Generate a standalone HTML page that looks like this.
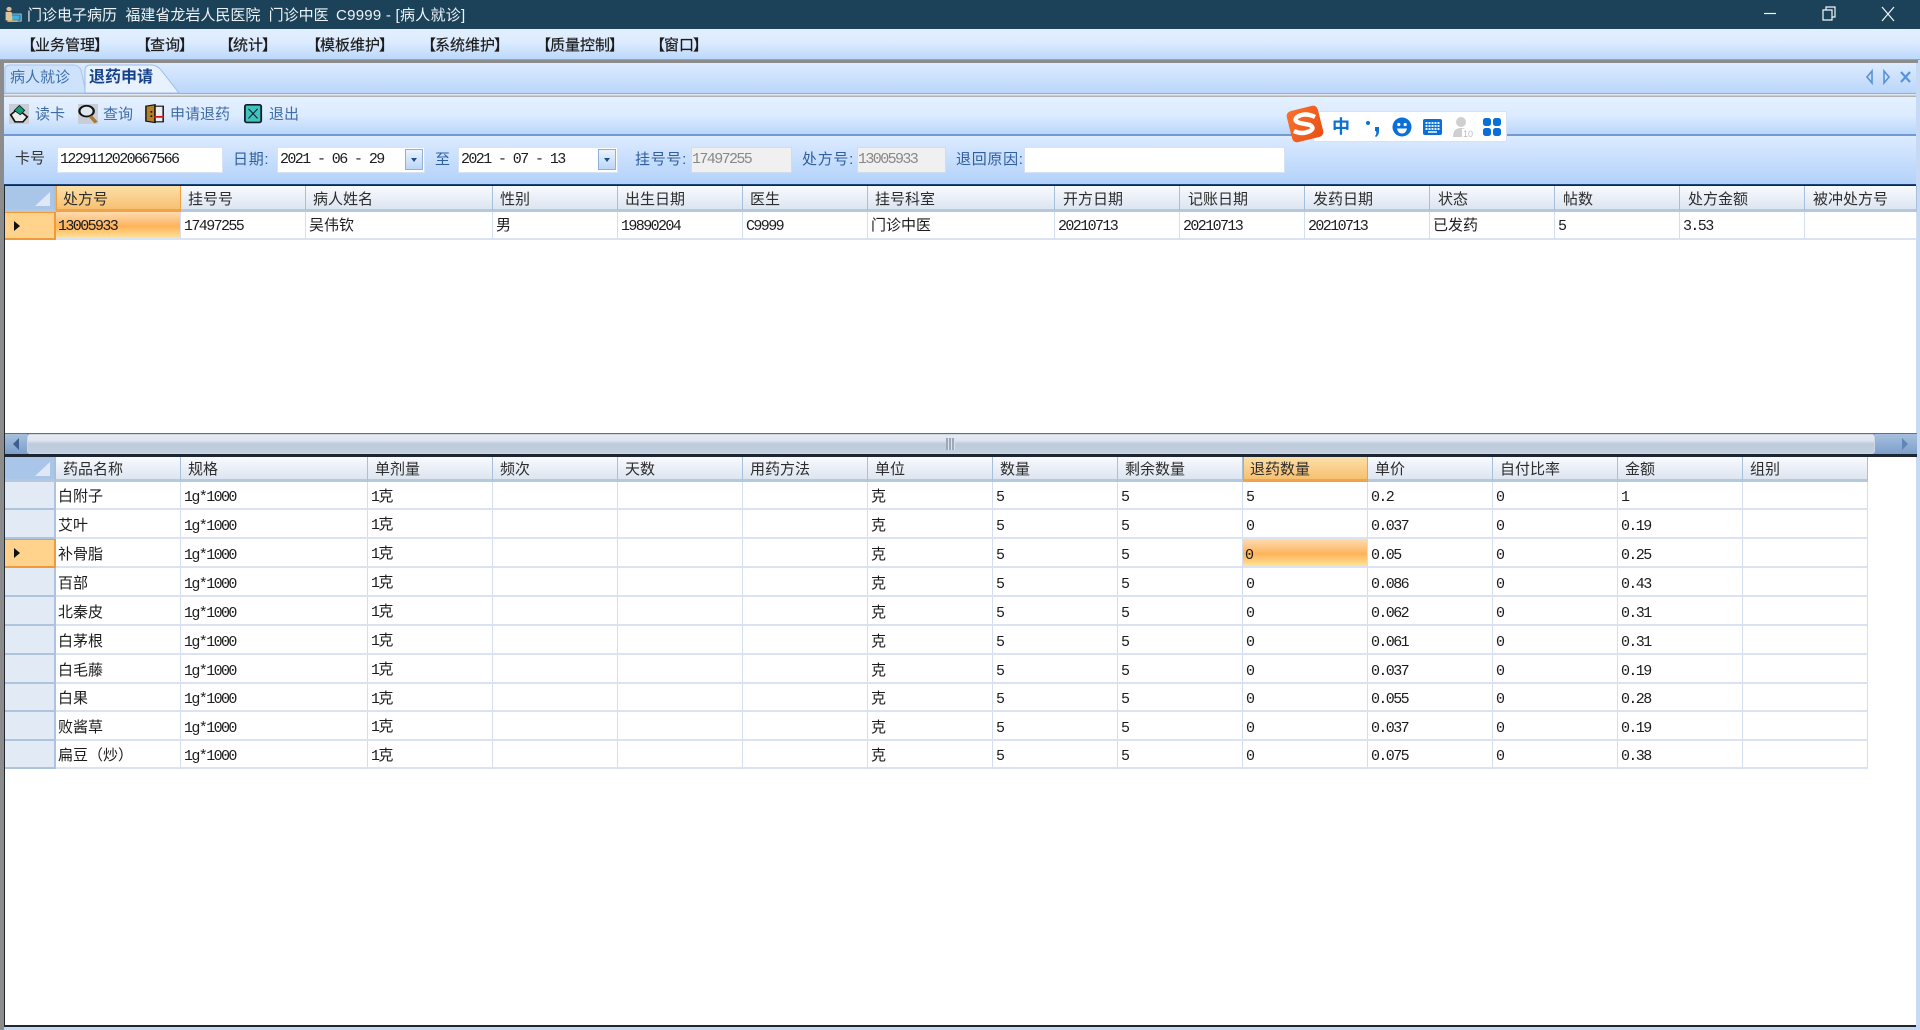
<!DOCTYPE html>
<html lang="zh-CN"><head><meta charset="utf-8"><title>门诊电子病历</title>
<style>
html,body{margin:0;padding:0;width:1920px;height:1030px;overflow:hidden;background:#c6daf6}
body{position:relative;font-family:"Liberation Sans","Noto Sans CJK SC",sans-serif;font-size:15px;color:#1c1c1c;filter:blur(.3px)}
.a{position:absolute}
.t{position:absolute;white-space:nowrap;line-height:20px}
.m{top:36px;-webkit-text-stroke:.2px #1c1c1c}
.n{font-family:"Liberation Mono","Noto Sans CJK SC",monospace;letter-spacing:-1.6px;font-size:15px}
.inp{position:absolute;background:#fff;border:1px solid #d6e3f4;box-sizing:border-box;height:26px;line-height:24px;padding-left:2px}
.dis{background:#f0f0f0;color:#888;border-color:#cfdcee;padding-left:0}
.btn{position:absolute;width:18px;height:21px;top:149px;background:linear-gradient(#eaf3fe,#bcd6f6);border:1px solid #8fb0d8;box-sizing:border-box}
.btn:after{content:"";position:absolute;left:5px;top:8px;border:3px solid transparent;border-top:4px solid #1d4f91}
.bl{color:#2f5f9f;letter-spacing:.7px;top:150px !important}
.tb{color:#3f6ba6}
table{position:absolute;border-collapse:separate;border-spacing:0;table-layout:fixed;background:#fff}
td{box-sizing:border-box;padding:4px 0 0 3px;border-right:1px solid #d3deee;border-bottom:2px solid #d9e3f1;overflow:hidden;white-space:nowrap;color:#1c1c1c;line-height:16px}
td.n{padding-top:6px}
.T td{padding-top:1px}
.T td.n{padding-top:3px}
tr.h td{background:linear-gradient(#f8fafd,#dde5f1);border-right:1px solid #a6bfda;border-bottom:3px solid #b4c8de;padding:4px 0 0 7px;color:#2c2c2c}
tr.h td.sel{background:linear-gradient(#fbe0a8,#f7c071);border-right:1px solid #f0a040;border-bottom:3px solid #f2a24a;border-left:1px solid #f0a040;padding-left:6px}
.T tr.h td:nth-child(n+9){padding-left:8px}
td.rh{background:#e2eaf6;border-right:2px solid #aec4de;border-bottom:2px solid #aec4de;padding:0}
td.rhs{background:#ffd38c;border-right:2px solid #f19a3c;border-bottom:2px solid #f19a3c;border-top:1px solid #f19a3c;padding:0 !important;position:relative}
td.rhs:after{content:"";position:absolute;left:9px;top:50%;margin-top:-5px;border:5px solid transparent;border-left:6px solid #111;border-right:0}
td.c{background:#a9c6e9 !important;padding:0 !important;position:relative;border-right:2px solid #a6bfda !important}
td.c:after{content:"";position:absolute;right:4px;bottom:3px;border:0 solid transparent;border-width:0 0 14px 15px;border-bottom-color:#dfe8f4}
td.cs{background:linear-gradient(#fedcae 0,#fdc27e 35%,#fdb359 55%,#ffe39a 100%);padding-left:2px}
.L td:nth-child(2){padding-left:2px}
.L tr.h td:nth-child(2){padding-left:7px}
.L td:nth-child(3){padding-left:3px}
.L tr.h td:nth-child(3){padding-left:7px}
</style></head><body>

<!-- title bar -->
<div class="a" style="left:0;top:0;width:1920px;height:29px;background:#1c4259"></div>
<svg class="a" style="left:3px;top:4px" width="19" height="20" viewBox="0 0 22 28" preserveAspectRatio="none"><rect x="7" y="14" width="14" height="10" fill="#1d6f9c" stroke="#cfe3ee"/><rect x="9" y="16" width="10" height="6" fill="#3fb0e0"/><circle cx="7" cy="7" r="3" fill="#e8b890"/><path d="M3 11h7l1 12H3z" fill="#e0c49a"/><path d="M5 24h12" stroke="#f0c060" stroke-width="2"/></svg>
<div class="t" style="left:27px;top:6px;color:#eef3f7;font-size:15px">门诊电子病历&nbsp;&nbsp;福建省龙岩人民医院&nbsp;&nbsp;门诊中医&nbsp;&nbsp;<span style="letter-spacing:.25px;margin-left:-1px">C9999 - [病人就诊]</span></div>
<svg class="a" style="left:1759px;top:1px" width="140" height="26" viewBox="0 0 140 26" fill="none" stroke="#f2f6f9" stroke-width="1.2"><path d="M5 12.5h12"/><path d="M64 9h9v10h-9z"/><path d="M67 9V6h9v10h-3"/><path d="M123 6l12 14M135 6l-12 14"/></svg>

<!-- menu -->
<div class="a" style="left:0;top:29px;width:1920px;height:31px;background:linear-gradient(#e3efff,#dcebfe 45%,#bcd8fb);border-bottom:1px solid #7fa6d6;box-sizing:border-box"></div>
<div class="t m" style="left:21px"><span style="margin-right:-1px">【</span>业务管理<span style="margin-left:-1px">】</span></div>
<div class="t m" style="left:136px"><span style="margin-right:-1px">【</span>查询<span style="margin-left:-1px">】</span></div>
<div class="t m" style="left:219px"><span style="margin-right:-1px">【</span>统计<span style="margin-left:-1px">】</span></div>
<div class="t m" style="left:306px"><span style="margin-right:-1px">【</span>模板维护<span style="margin-left:-1px">】</span></div>
<div class="t m" style="left:421px"><span style="margin-right:-1px">【</span>系统维护<span style="margin-left:-1px">】</span></div>
<div class="t m" style="left:536px"><span style="margin-right:-1px">【</span>质量控制<span style="margin-left:-1px">】</span></div>
<div class="t m" style="left:650px"><span style="margin-right:-1px">【</span>窗口<span style="margin-left:-1px">】</span></div>

<!-- gray frame -->
<div class="a" style="left:0;top:60px;width:1918px;height:3px;background:#8c8c8c"></div>
<div class="a" style="left:0;top:60px;width:4px;height:970px;background:#8c8c8c"></div>

<!-- tab bar -->
<div class="a" style="left:4px;top:63px;width:1912px;height:31px;background:linear-gradient(#dcebff,#b9d6fb);border-bottom:1px solid #8fb1dc;box-sizing:border-box"></div>
<svg class="a" style="left:4px;top:64px" width="176" height="30" viewBox="0 0 176 30"><path d="M1 29V6q0-5 5-5h63q6 0 8 5l5 23z" fill="#cfe2fb" stroke="#a9c5ee"/><path d="M81 29V6q0-5 6-5h60q6 0 10 5l18 23z" fill="#e8f2ff" stroke="#9dbce8"/></svg>
<div class="t" style="left:10px;top:68px;color:#3f70aa">病人就诊</div>
<div class="t" style="left:89px;top:68px;color:#15428b;font-weight:bold;font-size:16px">退药申请</div>
<svg class="a" style="left:1864px;top:68px" width="50" height="18" viewBox="0 0 50 18" fill="none" stroke="#5a92dc" stroke-width="1.6"><path d="M8 3L3 9l5 6z"/><path d="M20 3l5 6-5 6z"/><path d="M37 4l9 10M46 4l-9 10" stroke-width="2.2"/></svg>

<!-- toolbar -->
<div class="a" style="left:4px;top:94px;width:1912px;height:3px;background:linear-gradient(#eef4fd,#a6a6a6)"></div>
<div class="a" style="left:4px;top:97px;width:1912px;height:39px;background:linear-gradient(#e3f0ff,#dcebff 50%,#bad6fa);border-bottom:2px solid #6f9bd2;box-sizing:border-box"></div>
<svg class="a" style="left:9px;top:104px" width="20" height="20" viewBox="0 0 23 28" preserveAspectRatio="none"><rect width="23" height="28" fill="#c9ced6"/><path d="M2 15l8-8 11 11-5 7H7z" fill="#eee" stroke="#111" stroke-width="2"/><path d="M6 9l6-7 6 7-5 6z" fill="#14a070" stroke="#012"/></svg>
<svg class="a" style="left:78px;top:104px" width="20" height="20" viewBox="0 0 21 28" preserveAspectRatio="none"><rect width="21" height="28" fill="#c9ced6"/><circle cx="9" cy="10" r="7.5" fill="#dfe7f1" stroke="#111" stroke-width="2.4"/><path d="M13 17l6 9" stroke="#a9773a" stroke-width="4"/></svg>
<svg class="a" style="left:145px;top:104px" width="20" height="20" viewBox="0 0 22 28" preserveAspectRatio="none"><path d="M1 3l10-2v25L1 24z" fill="#b5802a" stroke="#111" stroke-width="1.6"/><path d="M11 3h9v22h-9z" fill="#eee" stroke="#111" stroke-width="1.6"/><path d="M10 18h11" stroke="#d01818" stroke-width="2.5"/><circle cx="7" cy="11" r="1.2" fill="#111"/><circle cx="7" cy="17" r="1.2" fill="#111"/></svg>
<svg class="a" style="left:244px;top:104px" width="19" height="20" viewBox="0 0 21 25" preserveAspectRatio="none"><rect x="1" y="1" width="18" height="22" rx="2" fill="#3ec4bd" stroke="#15202a" stroke-width="2"/><path d="M5 6l10 12M15 6L5 18" stroke="#123" stroke-width="1.3"/></svg>
<div class="t tb" style="left:35px;top:105px">读卡</div>
<div class="t tb" style="left:103px;top:105px">查询</div>
<div class="t tb" style="left:170px;top:105px">申请退药</div>
<div class="t tb" style="left:269px;top:105px">退出</div>

<!-- filter -->
<div class="a" style="left:4px;top:136px;width:1912px;height:50px;background:linear-gradient(#dcebff,#b2d1fa);border-bottom:2px solid #1d4474;box-sizing:border-box"></div>
<div class="t" style="left:15px;top:149px;color:#333">卡号</div>
<div class="inp n" style="left:57px;top:147px;width:166px">1229112020667566</div>
<div class="t bl" style="left:233px">日期:</div>
<div class="inp n" style="left:277px;top:147px;width:148px">2021 - 06 - 29</div>
<div class="btn" style="left:405px"></div>
<div class="t bl" style="left:435px">至</div>
<div class="inp n" style="left:458px;top:147px;width:160px">2021 - 07 - 13</div>
<div class="btn" style="left:598px"></div>
<div class="t bl" style="left:635px">挂号号:</div>
<div class="inp n dis" style="left:691px;top:147px;width:101px">17497255</div>
<div class="t bl" style="left:802px">处方号:</div>
<div class="inp n dis" style="left:857px;top:147px;width:89px">13005933</div>
<div class="t bl" style="left:956px">退回原因:</div>
<div class="inp" style="left:1024px;top:147px;width:261px"></div>

<!-- sogou -->
<div class="a" style="left:1313px;top:111px;width:194px;height:31px;background:#fff;border:1px solid #d3e2f5;box-sizing:border-box;border-radius:2px"></div>
<div class="a" style="left:1289px;top:108px;width:32px;height:32px;background:linear-gradient(135deg,#f9722e,#e94f12);border-radius:5px;transform:rotate(-14deg)"></div>
<svg class="a" style="left:1291px;top:111px" width="28" height="27" viewBox="0 0 28 27" fill="none" stroke="#fff" stroke-width="4.4"><path d="M24 6Q14 1 6 6q-4 4 3 6l10 2q5 3 0 6-8 4-16 0"/></svg>
<div class="t" style="left:1332px;top:114px;color:#0a6fd6;font-size:18px;font-weight:bold;line-height:26px">中</div>
<svg class="a" style="left:1364px;top:118px" width="18" height="20" viewBox="0 0 18 20" fill="#0a6fd6"><circle cx="4" cy="5" r="2"/><path d="M11 9h4v4q0 4-3 6l-1-1q2-2 1-5h-1z"/></svg>
<svg class="a" style="left:1392px;top:117px" width="20" height="20" viewBox="0 0 20 20"><circle cx="10" cy="10" r="9.5" fill="#0a6fd6"/><circle cx="6.8" cy="7.5" r="1.6" fill="#fff"/><circle cx="13.2" cy="7.5" r="1.6" fill="#fff"/><path d="M5 11.5h10q-1 5-5 5t-5-5z" fill="#fff"/></svg>
<svg class="a" style="left:1423px;top:119px" width="19" height="16" viewBox="0 0 19 16"><rect width="19" height="16" rx="2" fill="#0a6fd6"/><path d="M2.5 4h14M2.5 7h14M2.5 10h14" stroke="#fff" stroke-width="1.7" stroke-dasharray="2 1"/><path d="M5 13h9" stroke="#fff" stroke-width="1.5"/></svg>
<svg class="a" style="left:1453px;top:116px" width="20" height="22" viewBox="0 0 20 22"><circle cx="8" cy="6" r="5" fill="#cfcfcf"/><path d="M0 21q0-9 8-9t8 9z" fill="#cfcfcf"/><rect x="9" y="13" width="11" height="9" fill="#fff"/><text x="10" y="21" font-size="9" fill="#bbb" font-family="Liberation Sans">10</text></svg>
<svg class="a" style="left:1483px;top:118px" width="18" height="18" viewBox="0 0 18 18" fill="#0a6fd6"><rect width="8" height="8" rx="2.5"/><rect x="10" width="8" height="8" rx="2.5"/><rect y="10" width="8" height="8" rx="2.5"/><rect x="10" y="10" width="8" height="8" rx="2.5"/></svg>

<!-- grid frame -->
<div class="a" style="left:4px;top:185px;width:1912px;height:842px;background:#fff;border:1px solid #20282f;border-width:1px 0 2px 1px;box-sizing:border-box"></div>

<!-- top grid -->
<table class="T" style="left:5px;top:186px;width:1912px">
<colgroup><col style="width:51px"><col style="width:125px"><col style="width:125px"><col style="width:187px"><col style="width:125px"><col style="width:125px"><col style="width:125px"><col style="width:187px"><col style="width:125px"><col style="width:125px"><col style="width:125px"><col style="width:125px"><col style="width:125px"><col style="width:125px"><col style="width:112px"></colgroup>
<tr class="h" style="height:26px"><td class="c"></td><td class="sel">处方号</td><td>挂号号</td><td>病人姓名</td><td>性别</td><td>出生日期</td><td>医生</td><td>挂号科室</td><td>开方日期</td><td>记账日期</td><td>发药日期</td><td>状态</td><td>帖数</td><td>处方金额</td><td>被冲处方号</td></tr>
<tr style="height:28px"><td class="rhs"></td><td class="n cs">13005933</td><td class="n">17497255</td><td>吴伟钦</td><td>男</td><td class="n">19890204</td><td class="n">C9999</td><td>门诊中医</td><td class="n">20210713</td><td class="n">20210713</td><td class="n">20210713</td><td>已发药</td><td class="n">5</td><td class="n">3.53</td><td></td></tr>
</table>

<!-- scrollbar -->
<div class="a" style="left:5px;top:433px;width:1912px;height:22px;background:#7f9fc8;border-top:1px solid #5d6f97;box-sizing:border-box"></div>
<div class="a" style="left:5px;top:434px;width:22px;height:20px;background:linear-gradient(#a6bfdd,#7d9fcb)"></div>
<div class="a" style="left:13px;top:438px;border:6px solid transparent;border-right:6px solid #3d5f8e;border-left:0"></div>
<div class="a" style="left:1875px;top:434px;width:42px;height:20px;background:linear-gradient(#a6bfdd,#7d9fcb)"></div>
<div class="a" style="left:1902px;top:438px;border:6px solid transparent;border-left:6px solid #5f86b8;border-right:0"></div>
<div class="a" style="left:27px;top:434px;width:1848px;height:20px;background:linear-gradient(#e6ebf2,#dfe5ee 30%,#bccadb 50%,#c3d0e0);border-radius:3px;box-sizing:border-box;border:1px solid #ccd6e4"></div>
<div class="a" style="left:946px;top:438px;width:9px;height:12px;background:repeating-linear-gradient(90deg,#9ba9ba 0 2px,#dbe2ec 2px 3px)"></div>
<div class="a" style="left:5px;top:454px;width:1912px;height:3px;background:#1d2733"></div>
<div class="a" style="left:1917px;top:432px;width:3px;height:25px;background:#c6daf6"></div>

<!-- lower grid -->
<table class="L" style="left:5px;top:457px;width:1863px">
<colgroup><col style="width:51px"><col style="width:125px"><col style="width:187px"><col style="width:125px"><col style="width:125px"><col style="width:125px"><col style="width:125px"><col style="width:125px"><col style="width:125px"><col style="width:125px"><col style="width:125px"><col style="width:125px"><col style="width:125px"><col style="width:125px"><col style="width:125px"></colgroup>
<tr class="h" style="height:25px"><td class="c"></td><td>药品名称</td><td>规格</td><td>单剂量</td><td>频次</td><td>天数</td><td>用药方法</td><td>单位</td><td>数量</td><td>剩余数量</td><td class="sel">退药数量</td><td>单价</td><td>自付比率</td><td>金额</td><td>组别</td></tr>
<tr style="height:28px"><td class="rh"></td><td>白附子</td><td class="n">1g*1000</td><td><span class="n">1</span>克</td><td></td><td></td><td></td><td>克</td><td class="n">5</td><td class="n">5</td><td class="n">5</td><td class="n">0.2</td><td class="n">0</td><td class="n">1</td><td></td></tr>
<tr style="height:29px"><td class="rh"></td><td>艾叶</td><td class="n">1g*1000</td><td><span class="n">1</span>克</td><td></td><td></td><td></td><td>克</td><td class="n">5</td><td class="n">5</td><td class="n">0</td><td class="n">0.037</td><td class="n">0</td><td class="n">0.19</td><td></td></tr>
<tr style="height:29px"><td class="rhs"></td><td>补骨脂</td><td class="n">1g*1000</td><td><span class="n">1</span>克</td><td></td><td></td><td></td><td>克</td><td class="n">5</td><td class="n">5</td><td class="n cs">0</td><td class="n">0.05</td><td class="n">0</td><td class="n">0.25</td><td></td></tr>
<tr style="height:29px"><td class="rh"></td><td>百部</td><td class="n">1g*1000</td><td><span class="n">1</span>克</td><td></td><td></td><td></td><td>克</td><td class="n">5</td><td class="n">5</td><td class="n">0</td><td class="n">0.086</td><td class="n">0</td><td class="n">0.43</td><td></td></tr>
<tr style="height:29px"><td class="rh"></td><td>北秦皮</td><td class="n">1g*1000</td><td><span class="n">1</span>克</td><td></td><td></td><td></td><td>克</td><td class="n">5</td><td class="n">5</td><td class="n">0</td><td class="n">0.062</td><td class="n">0</td><td class="n">0.31</td><td></td></tr>
<tr style="height:29px"><td class="rh"></td><td>白茅根</td><td class="n">1g*1000</td><td><span class="n">1</span>克</td><td></td><td></td><td></td><td>克</td><td class="n">5</td><td class="n">5</td><td class="n">0</td><td class="n">0.061</td><td class="n">0</td><td class="n">0.31</td><td></td></tr>
<tr style="height:29px"><td class="rh"></td><td>白毛藤</td><td class="n">1g*1000</td><td><span class="n">1</span>克</td><td></td><td></td><td></td><td>克</td><td class="n">5</td><td class="n">5</td><td class="n">0</td><td class="n">0.037</td><td class="n">0</td><td class="n">0.19</td><td></td></tr>
<tr style="height:28px"><td class="rh"></td><td>白果</td><td class="n">1g*1000</td><td><span class="n">1</span>克</td><td></td><td></td><td></td><td>克</td><td class="n">5</td><td class="n">5</td><td class="n">0</td><td class="n">0.055</td><td class="n">0</td><td class="n">0.28</td><td></td></tr>
<tr style="height:29px"><td class="rh"></td><td>败酱草</td><td class="n">1g*1000</td><td><span class="n">1</span>克</td><td></td><td></td><td></td><td>克</td><td class="n">5</td><td class="n">5</td><td class="n">0</td><td class="n">0.037</td><td class="n">0</td><td class="n">0.19</td><td></td></tr>
<tr style="height:28px"><td class="rh"></td><td>扁豆（炒）</td><td class="n">1g*1000</td><td><span class="n">1</span>克</td><td></td><td></td><td></td><td>克</td><td class="n">5</td><td class="n">5</td><td class="n">0</td><td class="n">0.075</td><td class="n">0</td><td class="n">0.38</td><td></td></tr>
</table>

</body></html>
